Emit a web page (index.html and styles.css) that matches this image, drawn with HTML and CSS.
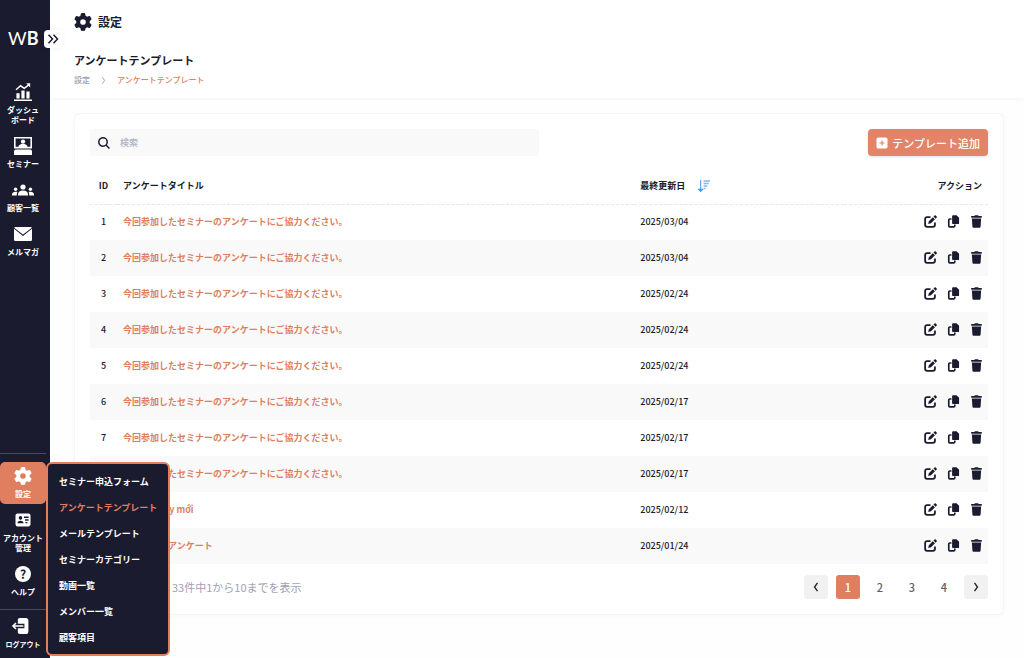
FILE: index.html
```html
<!DOCTYPE html>
<html lang="ja">
<head>
   <meta charset="UTF-8">
   <meta name="viewport" content="width=device-width, initial-scale=1.0">
   <title>アンケートテンプレート</title>
   <link rel="stylesheet" href="styles.css">
</head>
<body>
<svg class="sprite" aria-hidden="true">
   <symbol id="gear" viewBox="0 0 512 512">
      <path d="M495.9 166.6c3.2 8.7 .5 18.4-6.4 24.6l-43.3 39.4c1.1 8.3 1.7 16.8 1.7 25.4s-.6 17.1-1.7 25.4l43.3 39.4c6.9 6.2 9.6 15.9 6.4 24.6c-4.4 11.9-9.7 23.3-15.8 34.3l-4.7 8.1c-6.6 11-14 21.4-22.1 31.2c-5.9 7.2-15.7 9.6-24.5 6.8l-55.7-17.7c-13.4 10.3-28.2 18.9-44 25.4l-12.5 57.1c-2 9.1-9 16.3-18.2 17.8c-13.8 2.3-28 3.5-42.5 3.5s-28.7-1.2-42.5-3.5c-9.2-1.5-16.2-8.7-18.2-17.8l-12.5-57.1c-15.8-6.5-30.6-15.1-44-25.4L83.1 425.9c-8.8 2.8-18.6 .3-24.5-6.8c-8.1-9.8-15.5-20.2-22.1-31.2l-4.7-8.1c-6.1-11-11.4-22.4-15.8-34.3c-3.2-8.7-.5-18.4 6.4-24.6l43.3-39.4C64.6 273.1 64 264.6 64 256s.6-17.1 1.7-25.4L22.4 191.2c-6.9-6.2-9.6-15.9-6.4-24.6c4.4-11.9 9.7-23.3 15.8-34.3l4.7-8.1c6.6-11 14-21.4 22.1-31.2c5.9-7.2 15.7-9.6 24.5-6.8l55.7 17.7c13.4-10.3 28.2-18.9 44-25.4l12.5-57.1c2-9.1 9-16.3 18.2-17.8C227.3 1.2 241.5 0 256 0s28.7 1.2 42.5 3.5c9.2 1.5 16.2 8.7 18.2 17.8l12.5 57.1c15.8 6.5 30.6 15.1 44 25.4l55.7-17.7c8.8-2.8 18.6-.3 24.5 6.8c8.1 9.8 15.5 20.2 22.1 31.2l4.7 8.1c6.1 11 11.4 22.4 15.8 34.3zM256 336a80 80 0 1 0 0-160 80 80 0 1 0 0 160z"/>
   </symbol>
   <symbol id="chart" viewBox="0 0 18 18">
      <path d="M0 16.4h18V18H0zM2.4 10.2h3.2v5.2H2.4zM7.4 7.4h3.2v8H7.4zM12.4 8.6h3.2v6.8h-3.2z"/>
      <path d="M2 6.8 6.6 2.8l3.6 2.6 4.6-3.6" fill="none" stroke="currentColor" stroke-width="1.5"/>
      <path d="M12.2.2h4v4.2z"/>
   </symbol>
   <symbol id="seminar" viewBox="0 0 18 18">
      <path d="M0 0h18v11.4H0zM1.6 1.6v8.2h2.8c.3-1.6 1.6-2.4 3-2.8h3.2c1.4.4 2.7 1.2 3 2.8h2.8V1.6z" fill-rule="evenodd"/>
      <circle cx="9" cy="4.6" r="2.2"/>
      <path d="M1.4 12.4h15.2L18 13.8V18H0v-4.2z"/>
   </symbol>
   <symbol id="users" viewBox="0 0 22 18">
      <circle cx="11" cy="6" r="2.6"/>
      <path d="M6 14.6v-1.4c0-2.4 2-3.8 5-3.8s5 1.4 5 3.8v1.4z"/>
      <circle cx="3.6" cy="8.2" r="1.7"/>
      <circle cx="18.4" cy="8.2" r="1.7"/>
      <path d="M0 14.6v-1c0-1.8 1.4-2.9 3.6-2.9.7 0 1.3.1 1.8.3-.5.8-.6 1.6-.6 3.6zM22 14.6v-1c0-1.8-1.4-2.9-3.6-2.9-.7 0-1.3.1-1.8.3.5.8.6 1.6.6 3.6z"/>
   </symbol>
   <symbol id="mail" viewBox="0 0 18 18">
      <path d="M0 3.8 9 10.9 18 3.8v10.6c0 .9-.7 1.6-1.6 1.6H1.6C.7 16 0 15.3 0 14.4z"/>
      <path d="M1.6 2h14.8c.7 0 1.2.3 1.5.8L9 9.5.1 2.8C.4 2.3.9 2 1.6 2z"/>
   </symbol>
   <symbol id="idcard" viewBox="0 0 18 18">
      <path fill-rule="evenodd" d="M3.6 2.6h10.8c1.2 0 2.1.9 2.1 2.1v8.6c0 1.2-.9 2.1-2.1 2.1H3.6c-1.2 0-2.1-.9-2.1-2.1V4.700c0-1.200.9-2.100 2.100-2.100zM6.500 5.100a1.800 1.800 0 1 0 0 3.600 1.800 1.800 0 0 0 0-3.600zM3.400 12.200h6.200c0-1.600-1.200-2.500-3.100-2.500s-3.100.9-3.100 2.500zM10 5.600V7h4.600V5.600zM11 8.300v1.400h3.600V8.300zM11.400 11v1.300h2V11z"/>
   </symbol>
   <symbol id="logout" viewBox="0 0 18 18">
      <path d="M9 1h5.800c1.600 0 2.600 1 2.600 2.600v10.800c0 1.600-1 2.600-2.600 2.600H9c-1.400 0-2.200-.8-2.200-2.200v-3.600h6.600V6.800H6.800V3.200C6.800 1.800 7.600 1 9 1z"/>
      <path d="M12.400 9H2.200M5 6 2 9l3 3" fill="none" stroke="currentColor" stroke-width="1.600"/>
   </symbol>
   <symbol id="arrows" viewBox="0 0 12 12">
      <path d="M1.500 1.800 5.500 6l-4 4.200M6.500 1.800 10.500 6l-4 4.200" fill="none" stroke="currentColor" stroke-width="1.500"/>
   </symbol>
   <symbol id="left" viewBox="0 0 12 12">
      <path d="M7.500 1.800 4.500 6l3 4.200" fill="none" stroke="currentColor" stroke-width="1.300"/>
   </symbol>
   <symbol id="right" viewBox="0 0 12 12">
      <path d="M4.500 1.800 7.500 6l-3 4.200" fill="none" stroke="currentColor" stroke-width="1.300"/>
   </symbol>
   <symbol id="search" viewBox="0 0 12 12">
      <path d="M8.200 8.200 11.500 11.500M9.200 5A4.200 4.200 0 1 1 .8 5a4.200 4.200 0 0 1 8.400 0z" fill="none" stroke="currentColor" stroke-width="1.500"/>
   </symbol>
   <symbol id="plus" viewBox="0 0 12 12">
      <path fill-rule="evenodd" d="M2.300.5h7.400c1.100 0 1.800.7 1.800 1.800v7.400c0 1.100-.7 1.800-1.800 1.800H2.300C1.200 11.500.5 10.800.5 9.700V2.300C.5 1.200 1.200.5 2.300.5zM5.400 3.500v1.900H3.500v1.200h1.900v1.900h1.200V6.600h1.900V5.400H6.600V3.500z"/>
   </symbol>
   <symbol id="sort" viewBox="0 0 12 12">
      <path d="M2.700 0v10M.4 9.200h4.600L2.700 11.800z" stroke="currentColor" stroke-width="1"/>
      <path d="M5.600 1h6.400M5.600 3.500h5M5.600 6h3.600M5.600 8.500h2" stroke="currentColor" stroke-width="1.400" opacity=".7"/>
   </symbol>
   <symbol id="edit" viewBox="0 0 14 14">
      <path d="M7 2.200H3.400C2 2.200 1.200 3 1.200 4.400v6.200c0 1.400.8 2.200 2.200 2.200h6.200c1.400 0 2.200-.8 2.200-2.200V8" fill="none" stroke="currentColor" stroke-width="1.900"/>
      <path d="M9.500 2.400 11.800 4.700 7.500 9 4.500 9.700 5.200 6.700zM10.200 1.700l1-1c.5-.5 1.100-.5 1.600 0l.7.7c.5.5.5 1.100 0 1.600l-1 1z"/>
   </symbol>
   <symbol id="copy" viewBox="0 0 14 14">
      <path d="M6.800.2h3.400l2.800 2.800v5.500c0 .8-.5 1.300-1.300 1.300H6.800c-.8 0-1.300-.5-1.300-1.300v-7C5.500.7 6 .2 6.800.2z"/>
      <path d="M4.800 4.300H3.100c-.8 0-1.200.4-1.200 1.200v6c0 .8.400 1.200 1.200 1.200h4.100c.8 0 1.200-.4 1.200-1.200v-1.200" fill="none" stroke="currentColor" stroke-width="1.800"/>
   </symbol>
   <symbol id="trash" viewBox="0 0 14 14">
      <path d="M1.300 1.200h3.400L5.300.3h3.400l.6.900h3.400V3H1.300zM2 3.900h10l-.6 8.400c-.1.900-.6 1.400-1.400 1.400H4c-.8 0-1.300-.5-1.400-1.400z"/>
   </symbol>
</svg>

<div class="layout">
   <aside class="sidebar">
      <a class="logo" href="#">W<b>B</b></a>
      <button class="toggle" type="button" aria-label="メニューを開く"><svg class="icon-small"><use href="#arrows"/></svg></button>
      <nav class="nav">
         <a class="nav-item" href="#"><svg class="nav-icon"><use href="#chart"/></svg><span>ダッシュ<br>ボード</span></a>
         <a class="nav-item" href="#"><svg class="nav-icon"><use href="#seminar"/></svg><span>セミナー</span></a>
         <a class="nav-item" href="#"><svg class="nav-icon wide"><use href="#users"/></svg><span>顧客一覧</span></a>
         <a class="nav-item" href="#"><svg class="nav-icon"><use href="#mail"/></svg><span>メルマガ</span></a>
      </nav>
      <nav class="nav nav-bottom">
         <div class="nav-group">
            <a class="nav-item active" href="#"><svg class="nav-icon"><use href="#gear"/></svg><span>設定</span></a>
            <div class="submenu">
               <a href="#">セミナー申込フォーム</a>
               <a class="current" href="#">アンケートテンプレート</a>
               <a href="#">メールテンプレート</a>
               <a href="#">セミナーカテゴリー</a>
               <a href="#">動画一覧</a>
               <a href="#">メンバー一覧</a>
               <a href="#">顧客項目</a>
            </div>
         </div>
         <a class="nav-item" href="#"><svg class="nav-icon"><use href="#idcard"/></svg><span>アカウント<br>管理</span></a>
         <a class="nav-item" href="#"><span class="nav-icon"><span class="help">?</span></span><span>ヘルプ</span></a>
      </nav>
      <nav class="nav nav-logout">
         <a class="nav-item" href="#"><svg class="nav-icon logout-icon"><use href="#logout"/></svg><span>ログアウト</span></a>
      </nav>
   </aside>

   <div class="page">
      <header class="header">
         <div class="section-name"><svg class="section-icon"><use href="#gear"/></svg>設定</div>
         <h1>アンケートテンプレート</h1>
         <div class="breadcrumb">
            <a href="#">設定</a>
            <svg class="crumb-icon"><use href="#right"/></svg>
            <a class="current" href="#">アンケートテンプレート</a>
         </div>
      </header>

      <main class="card">
         <div class="toolbar">
            <label class="search">
               <svg class="icon-small"><use href="#search"/></svg>
               <input type="text" placeholder="検索" aria-label="検索">
            </label>
            <button class="add" type="button"><svg class="icon-small"><use href="#plus"/></svg>テンプレート追加</button>
         </div>

         <table class="list">
            <thead>
               <tr>
                  <th class="col-id">ID</th>
                  <th>アンケートタイトル</th>
                  <th class="col-date"><span class="sortable">最終更新日<svg class="sort-icon"><use href="#sort"/></svg></span></th>
                  <th class="col-action">アクション</th>
               </tr>
            </thead>
            <tbody id="rows"></tbody>
         </table>

         <div class="footer">
            <div class="summary">
               <select aria-label="表示件数"><option>10</option></select>
               <span>33件中1から10までを表示</span>
            </div>
            <div class="pages">
               <button class="step" type="button" aria-label="前へ"><svg class="icon-small"><use href="#left"/></svg></button>
               <button class="active" type="button">1</button>
               <button type="button">2</button>
               <button type="button">3</button>
               <button type="button">4</button>
               <button class="step" type="button" aria-label="次へ"><svg class="icon-small"><use href="#right"/></svg></button>
            </div>
         </div>
      </main>
   </div>
</div>

<script src="script.js"></script>
</body>
</html>
```
FILE: styles.css
```css
* {
   box-sizing: border-box;
}
body {
   margin: 0;
   font-family: "Noto Sans CJK JP", "Noto Sans", sans-serif;
   font-size: 9px;
   font-weight: 500;
   color: #1a1b2e;
   background-color: #fefefe;
}
a {
   color: inherit;
   text-decoration: none;
}
button, input, select {
   font: inherit;
   color: inherit;
   border: none;
   padding: 0;
   background: none;
}
button {
   cursor: pointer;
}
svg {
   fill: currentColor;
   flex: none;
}
.sprite {
   display: none;
}
.icon-small {
   width: 12px;
   height: 12px;
}
.layout {
   display: flex;
   min-height: 100vh;
}

/* sidebar */
.sidebar {
   position: relative;
   display: flex;
   flex-direction: column;
   flex: none;
   width: 50px;
   padding: 26px 4px 4px 0;
   background-color: #1a1b2e;
   color: white;
}
.logo {
   height: 24px;
   margin-bottom: 28px;
   padding-left: 8px;
   font-family: Lato, sans-serif;
   font-size: 18px;
   font-weight: 400;
   line-height: 24px;
}
.toggle {
   position: absolute;
   top: 30px;
   left: 44px;
   display: flex;
   align-items: center;
   justify-content: center;
   width: 18px;
   height: 18px;
   border-radius: 4px;
   background-color: white;
   color: #1a1b2e;
   box-shadow: 0 0 6px rgba(0, 0, 0, 0.05);
}
.nav {
   display: flex;
   flex-direction: column;
   gap: 2px;
}
.nav-bottom {
   margin-top: auto;
   padding: 8px 0 7px;
   border-top: 1px solid #494a5c;
}
.nav-logout {
   padding-top: 2px;
   border-top: 1px solid #494a5c;
}
.nav-item {
   display: flex;
   flex-direction: column;
   align-items: center;
   gap: 4px;
   padding: 5px 0;
   font-size: 8px;
   font-weight: 700;
   line-height: 10px;
   text-align: center;
   white-space: nowrap;
}
.nav-item.active {
   border-radius: 5px;
   background-color: #e07e60;
}
.nav-logout .nav-item {
   font-size: 7px;
}
.nav-icon {
   display: flex;
   align-items: center;
   justify-content: center;
   width: 18px;
   height: 18px;
}
.nav-icon.wide {
   width: 22px;
}
.logout-icon {
   margin-right: 6px;
}
.help {
   width: 16px;
   height: 16px;
   border-radius: 50%;
   background-color: white;
   color: #1a1b2e;
   font-size: 12px;
   font-weight: 700;
   line-height: 16px;
}
.nav-group {
   position: relative;
}
.submenu {
   position: absolute;
   top: 0;
   left: 100%;
   z-index: 10;
   display: flex;
   flex-direction: column;
   padding: 5px 11px 3px;
   border: 2px solid #e07e60;
   border-radius: 6px;
   background-color: #1a1b2e;
   font-weight: 700;
   line-height: 26px;
   white-space: nowrap;
}
.submenu .current {
   color: #e07e60;
}

/* page header */
.page {
   flex: 1;
   min-width: 0;
}
.header {
   padding: 12px 24px 11px;
   background-color: white;
   box-shadow: 0 1px 4px rgba(0, 0, 0, 0.05);
}
.section-name {
   display: flex;
   align-items: center;
   gap: 6px;
   font-size: 12px;
   font-weight: 700;
   line-height: 20px;
}
.section-icon {
   width: 18px;
   height: 18px;
}
h1 {
   margin: 19px 0 4px;
   font-size: 11px;
   font-weight: 700;
   line-height: 18px;
}
.breadcrumb {
   display: flex;
   align-items: center;
   gap: 9px;
   font-size: 8px;
   line-height: 14px;
   color: #9a9cb0;
}
.breadcrumb .current {
   color: #e07e60;
}
.crumb-icon {
   width: 9px;
   height: 9px;
}

/* list card */
.card {
   margin: 15px 20px 15px 24px;
   padding: 15px;
   border: 1px solid #f5f5f5;
   border-radius: 6px;
   background-color: white;
   box-shadow: 0 1px 4px rgba(0, 0, 0, 0.03);
}
.toolbar {
   display: flex;
   align-items: center;
   justify-content: space-between;
   height: 27px;
}
.search {
   display: flex;
   align-items: center;
   gap: 10px;
   width: 50%;
   height: 100%;
   padding: 0 8px;
   border-radius: 2px;
   background-color: #f9f9f9;
}
.search input {
   flex: 1;
   min-width: 0;
   outline: none;
}
.search input::placeholder {
   color: #b0b2c3;
}
.add {
   display: flex;
   align-items: center;
   gap: 4px;
   height: 100%;
   padding: 0 8px;
   border-radius: 4px;
   background-color: #e38469;
   color: white;
   font-size: 11px;
   box-shadow: 0 1px 3px rgba(0, 0, 0, 0.12);
}
.list {
   width: 100%;
   margin-top: 12px;
   border-collapse: collapse;
   table-layout: fixed;
}
.list th,
.list td {
   height: 36px;
   padding: 0 6px;
   text-align: left;
   line-height: 14px;
}
.list th {
   font-weight: 700;
   border-bottom: 1px dashed #e8e8ea;
}
.list .col-id {
   width: 27px;
   padding: 0;
   text-align: center;
}
.list .col-date {
   width: 210px;
}
.list .col-action {
   width: 16%;
   text-align: right;
}
.list tbody tr:nth-child(even) {
   background-color: #f9f9f9;
}
.list td a {
   color: #e07e60;
   font-weight: 700;
}
.sortable {
   display: flex;
   align-items: center;
   gap: 13px;
}
.sort-icon {
   width: 12px;
   height: 12px;
   color: #4b96f0;
}
.list td:last-child {
   padding-right: 5px;
}
.actions {
   display: flex;
   justify-content: flex-end;
   gap: 10px;
   padding-bottom: 2px;
}
.actions button {
   display: flex;
}
.actions svg {
   width: 13px;
   height: 13px;
}

/* footer */
.footer {
   display: flex;
   align-items: center;
   justify-content: space-between;
   margin-top: 11px;
}
.summary {
   display: flex;
   align-items: center;
   gap: 12px;
   font-size: 11px;
   font-weight: 400;
   color: #a0a2b6;
}
.summary select {
   width: 70px;
   height: 24px;
   padding: 0 8px;
   border-radius: 3px;
   background-color: #f9f9f9;
}
.pages {
   display: flex;
   gap: 8px;
}
.pages button {
   display: flex;
   align-items: center;
   justify-content: center;
   width: 24px;
   height: 24px;
   border-radius: 3px;
   font-size: 11px;
   color: #5b5d75;
}
.pages .step {
   background-color: #f1f1f2;
   color: #1a1b2e;
}
.pages .active {
   background-color: #e07e60;
   color: white;
}
```
FILE: script.js
```js
const title = '今回参加したセミナーのアンケートにご協力ください。';
const surveys = [
   [title, '2025/03/04'],
   [title, '2025/03/04'],
   [title, '2025/02/24'],
   [title, '2025/02/24'],
   [title, '2025/02/24'],
   [title, '2025/02/17'],
   [title, '2025/02/17'],
   [title, '2025/02/17'],
   ['Câu hỏi này mới', '2025/02/12'],
   ['セミナー後アンケート', '2025/01/24']
];

document.getElementById('rows').innerHTML = surveys.map(([name, date], i) => `
   <tr>
      <td class="col-id">${i + 1}</td>
      <td><a href="#">${name}</a></td>
      <td>${date}</td>
      <td>
         <div class="actions">
            <button type="button" aria-label="編集"><svg><use href="#edit"/></svg></button>
            <button type="button" aria-label="複製"><svg><use href="#copy"/></svg></button>
            <button type="button" aria-label="削除"><svg><use href="#trash"/></svg></button>
         </div>
      </td>
   </tr>`).join('');
```
